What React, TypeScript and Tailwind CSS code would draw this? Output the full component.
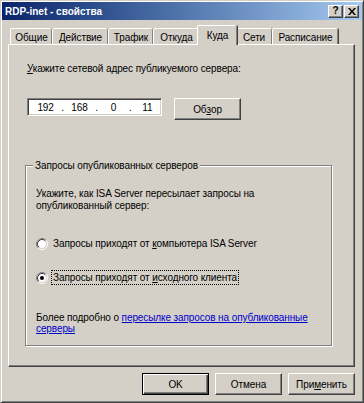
import React from 'react';

const font = { fontFamily: '"Liberation Sans", Arial, sans-serif' };

const tabs = [
  { label: 'Общие', w: 'w-[42px]' },
  { label: 'Действие', w: 'w-[56px]' },
  { label: 'Трафик', w: 'w-[45px]' },
  { label: 'Откуда', w: 'w-[46px]' },
  { label: 'Куда', w: 'w-[40px]', active: true },
  { label: 'Сети', w: 'w-[37px]' },
  { label: 'Расписание', w: 'w-[66px]' },
];

const Radio = ({ checked }: { checked?: boolean }) => (
  <svg width="12" height="12" viewBox="0 0 12 12" className="shrink-0">
    <circle cx="6" cy="6" r="4.5" fill="#fff" />
    <path d="M2.11 9.89 A5.5 5.5 0 0 1 9.89 2.11" fill="none" stroke="#808080" strokeWidth="1" />
    <path d="M9.89 2.11 A5.5 5.5 0 0 1 2.11 9.89" fill="none" stroke="#fff" strokeWidth="1" />
    <path d="M2.82 9.18 A4.5 4.5 0 0 1 9.18 2.82" fill="none" stroke="#404040" strokeWidth="1" />
    <path d="M9.18 2.82 A4.5 4.5 0 0 1 2.82 9.18" fill="none" stroke="#d4d0c8" strokeWidth="1" />
    {checked && <circle cx="6" cy="6" r="2" fill="#000" />}
  </svg>
);

const Button = ({ children, isDefault }: { children: React.ReactNode; isDefault?: boolean }) => (
  <div
    className={
      isDefault
        ? 'w-[67px] h-[22px] flex items-center justify-center border border-black shadow-[inset_1px_1px_#fff,inset_-1px_-1px_#404040,inset_-2px_-2px_#808080]'
        : 'w-[67px] h-[22px] flex items-center justify-center border border-t-white border-l-white border-r-[#404040] border-b-[#404040] shadow-[inset_-1px_-1px_#808080]'
    }
  >
    {children}
  </div>
);

const App = () => {
  return (
    <div
      className="w-[364px] h-[403px] bg-[#d4d0c8] text-[10px] tracking-[-0.1px] text-black leading-[13px] border border-t-[#d4d0c8] border-l-[#d4d0c8] border-r-[#404040] border-b-[#404040] p-[1px] shadow-[inset_1px_1px_#fff,inset_-1px_-1px_#808080] flex flex-col"
      style={font}
    >
      {/* title bar */}
      <div className="h-[18px] bg-linear-to-r from-[#0a246a] to-[#a6caf0] flex items-center pl-[3px] pr-[3px]">
        <span className="font-bold text-white text-[10px] tracking-[0px]">RDP-inet - свойства</span>
        <div className="ml-auto flex gap-[1px]">
          <div className="w-[15px] h-[13px] bg-[#d4d0c8] border border-t-white border-l-white border-r-[#404040] border-b-[#404040] shadow-[inset_-1px_-1px_#808080] flex items-center justify-center font-bold text-[10px] leading-none">
            ?
          </div>
          <div className="w-[15px] h-[13px] bg-[#d4d0c8] border border-t-white border-l-white border-r-[#404040] border-b-[#404040] shadow-[inset_-1px_-1px_#808080] flex items-center justify-center">
            <svg width="8" height="7" viewBox="0 0 8 7">
              <path d="M0 0h2l2 2.5L6 0h2L5 3.5 8 7H6L4 4.5 2 7H0l3-3.5z" fill="#000" />
            </svg>
          </div>
        </div>
      </div>

      {/* tabs */}
      <div className="pl-[8px] mt-[5px] flex items-end h-[19px] relative z-10">
        {tabs.map((t) =>
          t.active ? (
            <div
              key={t.label}
              className={`${t.w} h-[20px] -mx-[2px] -mb-[1px] bg-[#d4d0c8] border-t border-l border-white rounded-t-[2px] shadow-[inset_-1px_0_#808080,1px_0_#404040] flex items-start justify-center pt-[3px] relative z-10`}
            >
              {t.label}
            </div>
          ) : (
            <div
              key={t.label}
              className={`${t.w} h-[16px] border-t border-l border-white rounded-t-[2px] shadow-[inset_-1px_0_#808080,1px_0_#404040] flex items-start justify-center pt-[2px]`}
            >
              {t.label}
            </div>
          )
        )}
      </div>

      {/* panel */}
      <div className="ml-[6px] mr-[7px] h-[323px] border border-t-white border-l-white border-r-[#404040] border-b-[#404040] shadow-[inset_-1px_-1px_#808080] pl-[16px] pt-[17px] flex flex-col">
        <div className="ml-[2px]">
          <span className="underline">У</span>кажите сетевой адрес публикуемого сервера:
        </div>

        <div className="flex items-start mt-[23px] ml-[2px]">
          <div className="w-[135px] h-[18px] bg-white border border-t-[#808080] border-l-[#808080] border-r-white border-b-white shadow-[inset_1px_1px_#404040,inset_-1px_-1px_#d4d0c8] flex items-center pl-[4px]">
            <span className="w-[28px] text-center">192</span>
            <span className="w-[7px] text-center">.</span>
            <span className="w-[28px] text-center">168</span>
            <span className="w-[7px] text-center">.</span>
            <span className="w-[28px] text-center">0</span>
            <span className="w-[7px] text-center">.</span>
            <span className="w-[28px] text-center">11</span>
          </div>
          <div className="ml-[12px]">
            <Button>
              Об<span className="underline">з</span>ор
            </Button>
          </div>
        </div>

        <div className="relative mt-[45px] w-[307px] h-[181px] border border-[#808080] shadow-[1px_1px_#fff,inset_1px_1px_#fff] pl-[10px] pt-[22px] flex flex-col">
          <span className="absolute -top-[7px] left-[7px] bg-[#d4d0c8] px-[2px]">
            Запросы опубликованных серверов
          </span>
          <div className="leading-[12px]">
            Укажите, как ISA Server пересылает запросы на
            <br />
            опубликованный сервер:
          </div>

          <div className="flex items-center mt-[25px]">
            <Radio />
            <span className="ml-[5px]">
              Запросы приходят от <span className="underline">к</span>омпьютера ISA Server
            </span>
          </div>

          <div className="flex items-center mt-[20px]">
            <Radio checked />
            <span className="ml-[3px] border border-dotted border-black px-[1px]">
              Запросы приходят от <span className="underline">и</span>сходного клиента
            </span>
          </div>

          <div className="mt-[27px] leading-[11px] whitespace-nowrap">
            Более подробно о{' '}
            <span className="text-[#0000cc] underline">пересылке запросов на опубликованные</span>
            <br />
            <span className="text-[#0000cc] underline">серверы</span>
          </div>
        </div>
      </div>

      {/* buttons */}
      <div className="flex justify-end gap-[6px] mt-[6px] mr-[7px]">
        <Button isDefault>OK</Button>
        <Button>Отмена</Button>
        <Button>
          При<span className="underline">м</span>енить
        </Button>
      </div>
    </div>
  );
};

export default App;
